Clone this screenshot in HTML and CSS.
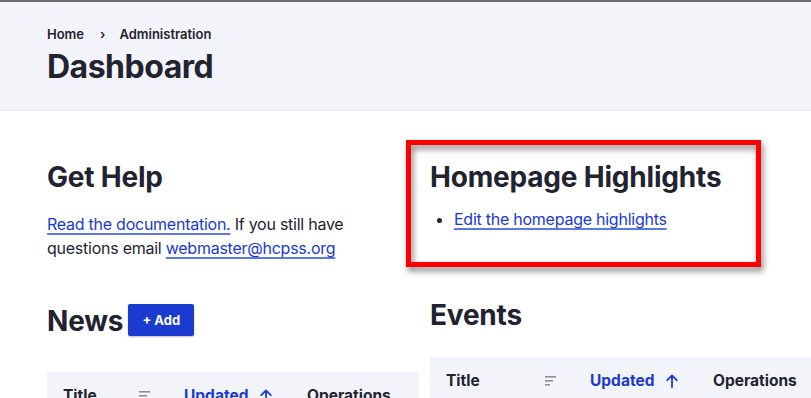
FILE: index.html
```html
<!DOCTYPE html>
<html lang="en">
<head>
<meta charset="utf-8">
<title>Dashboard</title>
<link rel="stylesheet" href="styles.css">
</head>
<body>
<header class="page-header">
  <nav class="breadcrumb">
    <a href="#">Home</a>
    <span class="sep">›</span>
    <a href="#">Administration</a>
  </nav>
  <h1 class="page-title">Dashboard</h1>
</header>

<main class="dashboard">
  <div class="col">
    <section class="block">
      <h2 class="block-title">Get Help</h2>
      <p class="help-text"><a class="link" href="#">Read the documentation.</a> If you still have questions email <a class="link" href="#">webmaster@hcpss.org</a></p>
    </section>

    <section class="block news">
      <div class="title-row">
        <h2 class="block-title">News</h2>
        <a class="btn" href="#">+ Add</a>
      </div>
      <table class="list-table news-table">
        <thead>
          <tr>
            <th class="c-title"><span class="th-inner">Title<svg class="sort-icon" viewBox="0 0 12 10" width="12" height="10"><rect x="0" y="0" width="11" height="1.6" fill="#8c8f99"/><rect x="0" y="4" width="8" height="1.6" fill="#8c8f99"/><rect x="0" y="8" width="5" height="1.6" fill="#8c8f99"/></svg></span></th>
            <th class="c-updated"><span class="th-inner sorted">Updated<svg class="arrow" viewBox="0 0 12 14" width="12" height="14"><path d="M6 13V1.5M1.2 6.2L6 1.4l4.8 4.8" fill="none" stroke="#1a3ad0" stroke-width="1.8" stroke-linecap="round" stroke-linejoin="round"/></svg></span></th>
            <th class="c-ops">Operations</th>
          </tr>
        </thead>
      </table>
    </section>
  </div>

  <div class="col">
    <section class="block highlights">
      <h2 class="block-title">Homepage Highlights</h2>
      <ul class="hl-list">
        <li><a class="link" href="#">Edit the homepage highlights</a></li>
      </ul>
      <div class="annotation" aria-hidden="true"></div>
    </section>

    <section class="block events">
      <h2 class="block-title">Events</h2>
      <table class="list-table events-table">
        <thead>
          <tr>
            <th class="c-title"><span class="th-inner">Title<svg class="sort-icon" viewBox="0 0 12 10" width="12" height="10"><rect x="0" y="0" width="11" height="1.6" fill="#8c8f99"/><rect x="0" y="4" width="8" height="1.6" fill="#8c8f99"/><rect x="0" y="8" width="5" height="1.6" fill="#8c8f99"/></svg></span></th>
            <th class="c-updated"><span class="th-inner sorted">Updated<svg class="arrow" viewBox="0 0 12 14" width="12" height="14"><path d="M6 13V1.5M1.2 6.2L6 1.4l4.8 4.8" fill="none" stroke="#1a3ad0" stroke-width="1.8" stroke-linecap="round" stroke-linejoin="round"/></svg></span></th>
            <th class="c-ops">Operations</th>
          </tr>
        </thead>
      </table>
    </section>
  </div>
</main>
</body>
</html>
```

FILE: styles.css
```css
* { box-sizing: border-box; }

html, body {
  margin: 0;
  padding: 0;
  overflow: hidden;
}

body {
  font-family: Inter, "Noto Sans", "Liberation Sans", sans-serif;
  color: #222330;
  background: #ffffff;
  width: 811px;
  height: 398px;
}

a { color: inherit; text-decoration: none; }

.page-header {
  border-top: 2px solid #6e6e70;
  background: #f3f4f9;
  padding: 22px 47px 23px;
  border-bottom: 1px solid #eceef4;
}

.breadcrumb {
  display: flex;
  align-items: center;
  font-size: 13px;
  line-height: 20px;
  font-weight: 600;
  color: #222330;
}

.breadcrumb .sep {
  margin: 0 14px 0 16px;
  font-weight: 600;
}

.page-title {
  margin: 3px 0 0;
  font-size: 32px;
  line-height: 40px;
  font-weight: 700;
  letter-spacing: -0.5px;
}

.dashboard {
  display: grid;
  grid-template-columns: 372px 400px;
  column-gap: 11px;
  padding: 48px 0 0 47px;
}

.col { display: flex; flex-direction: column; }

.block-title {
  margin: 0;
  font-size: 28px;
  line-height: 36px;
  font-weight: 700;
  letter-spacing: -0.2px;
}

.link {
  color: #1a3ad0;
  text-decoration: underline;
  text-decoration-color: #5b78e3;
  text-decoration-thickness: 1.5px;
  text-underline-offset: 3px;
}

.help-text {
  margin: 17px 0 0;
  font-size: 16px;
  line-height: 24px;
  letter-spacing: -0.25px;
  max-width: 350px;
}

.news { margin-top: 43px; }

.title-row {
  display: flex;
  align-items: flex-start;
  gap: 5px;
}

.btn {
  margin-top: 1px;
  display: inline-flex;
  align-items: center;
  justify-content: center;
  width: 66px;
  height: 32px;
  background: #1a3ad0;
  color: #ffffff;
  font-size: 13px;
  font-weight: 700;
  border-radius: 2px;
  box-shadow: 0 1px 2px rgba(0, 0, 0, 0.25);
}

.list-table {
  border-collapse: collapse;
  table-layout: fixed;
  background: #f3f4f9;
}

.news-table { margin-top: 33px; width: 372px; }
.events-table { margin-top: 24px; width: 400px; }

.list-table th {
  text-align: left;
  font-size: 15.5px;
  line-height: 20px;
  font-weight: 700;
  padding: 14px 16px 13px 16px;
  white-space: nowrap;
}

.news-table .c-title { width: 121px; }
.events-table .c-title { width: 144px; }
.list-table .c-updated { width: 123px; }

.list-table .c-title { padding-right: 17px; }

.th-inner {
  display: flex;
  align-items: center;
  justify-content: space-between;
}

.sorted {
  justify-content: flex-start;
  gap: 12px;
  color: #1a3ad0;
}

.sort-icon { display: block; }
.arrow { display: block; margin-top: -1px; }

.highlights { position: relative; }

.hl-list {
  margin: 12px 0 0;
  padding: 0 0 0 24px;
  font-size: 16px;
  line-height: 24px;
  letter-spacing: -0.25px;
}

.annotation {
  position: absolute;
  left: -24px;
  top: -19px;
  width: 355px;
  height: 127px;
  border: 5px solid #ff0000;
  filter: drop-shadow(2px 4px 3px rgba(0, 0, 0, 0.5));
  pointer-events: none;
}

.events { margin-top: 66px; }
```
